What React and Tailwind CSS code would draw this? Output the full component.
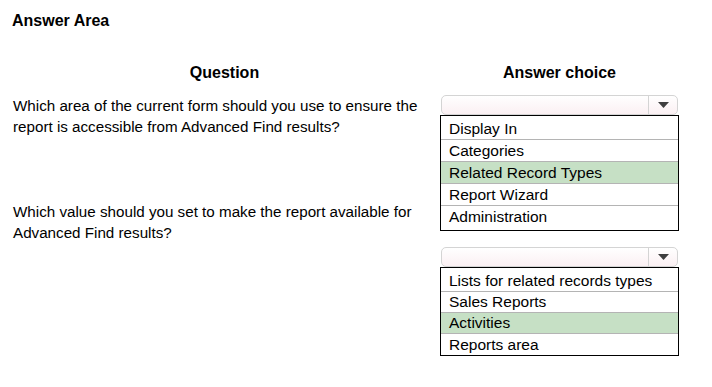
import React from "react";

function Select() {
  return (
    <div className="ml-[1px] mr-[1px] h-[20px] flex rounded-[5px] border border-[#d4d4d4] bg-gradient-to-b from-[#ffffff] to-[#fbf0f3]">
      <div className="flex-1" />
      <div className="w-[29px] border-l border-[#d4d4d4] flex items-center justify-center">
        <svg width="11" height="6" viewBox="0 0 11 6">
          <polygon points="0,0 11,0 5.5,6" fill="#3f3f3f" />
        </svg>
      </div>
    </div>
  );
}

function List({ items, selected, rowH, pt, pb }) {
  return (
    <div className={`border border-black ${pt} ${pb}`}>
      {items.map((it, i) => (
        <div
          key={it}
          className={`${rowH} pl-[8px] flex items-center ${
            i < items.length - 1 ? "border-b border-[#b4b4b4]" : ""
          } ${i === selected ? "bg-[#c6e0c5]" : ""}`}
        >
          {it}
        </div>
      ))}
    </div>
  );
}

export default function App() {
  return (
    <div className="w-[712px] h-[387px] bg-white text-black font-['Liberation_Sans',Arial,sans-serif]">
      <div className="pl-[12px] pt-[12px] text-[16px] font-bold leading-[18px]">
        Answer Area
      </div>
      <div className="flex pl-[13px] mt-[34px] text-[16px] font-bold leading-[18px]">
        <div className="w-[423px] text-center">Question</div>
        <div className="ml-[4px] w-[239px] text-center">Answer choice</div>
      </div>
      <div className="flex pl-[13px] mt-[12px]">
        <div className="w-[423px] text-[15.2px] leading-[21px]">
          <p className="mt-[1px]">
            Which area of the current form should you use to ensure the
            <br />
            report is accessible from Advanced Find results?
          </p>
          <p className="mt-[64px]">
            Which value should you set to make the report available for
            <br />
            Advanced Find results?
          </p>
        </div>
        <div className="ml-[4px] w-[239px] text-[15.5px] leading-[18px]">
          <div className="mt-[1px]">
            <Select />
            <List
              items={[
                "Display In",
                "Categories",
                "Related Record Types",
                "Report Wizard",
                "Administration",
              ]}
              selected={2}
              rowH="h-[22px]"
              pt="pt-[2px]"
              pb="pb-[2px]"
            />
          </div>
          <div className="mt-[16px]">
            <Select />
            <List
              items={[
                "Lists for related records types",
                "Sales Reports",
                "Activities",
                "Reports area",
              ]}
              selected={2}
              rowH="h-[21px]"
              pt="pt-[3px]"
              pb="pb-[0px]"
            />
          </div>
        </div>
      </div>
    </div>
  );
}
